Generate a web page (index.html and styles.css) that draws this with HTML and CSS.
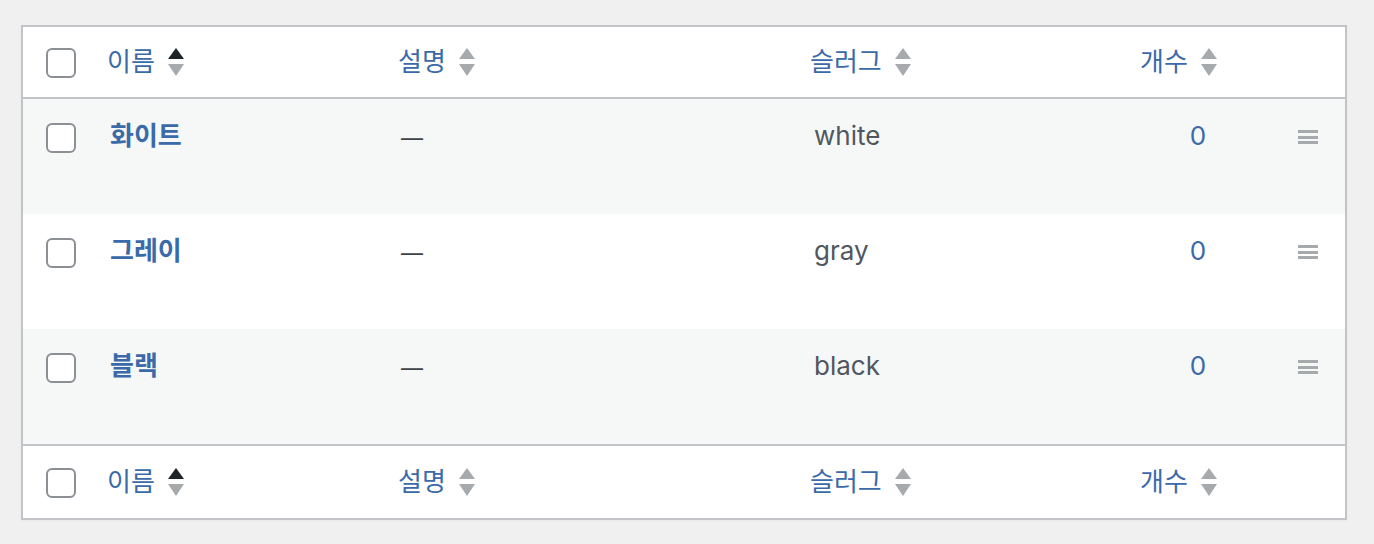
FILE: index.html
```html
<!DOCTYPE html>
<html lang="ko">
  <head>
    <meta charset="UTF-8" />
    <title>속성 목록</title>
    <link rel="stylesheet" href="styles.css">
  </head>
  <body>
    <table class="terms">
      <thead>
        <tr>
          <th class="col-check"><span class="checkbox"></span></th>
          <th class="col-name"><a href="#">이름<span class="sort sort-asc"><svg viewBox="0 0 16 28" width="16" height="28"><path class="up" d="M8 0 L16 11 L0 11 Z"/><path class="down" d="M0 16 L16 16 L8 28 Z"/></svg></span></a></th>
          <th class="col-desc"><a href="#">설명<span class="sort"><svg viewBox="0 0 16 28" width="16" height="28"><path class="up" d="M8 0 L16 11 L0 11 Z"/><path class="down" d="M0 16 L16 16 L8 28 Z"/></svg></span></a></th>
          <th class="col-slug"><a href="#">슬러그<span class="sort"><svg viewBox="0 0 16 28" width="16" height="28"><path class="up" d="M8 0 L16 11 L0 11 Z"/><path class="down" d="M0 16 L16 16 L8 28 Z"/></svg></span></a></th>
          <th class="col-count"><a href="#">개수<span class="sort"><svg viewBox="0 0 16 28" width="16" height="28"><path class="up" d="M8 0 L16 11 L0 11 Z"/><path class="down" d="M0 16 L16 16 L8 28 Z"/></svg></span></a></th>
          <th class="col-handle"></th>
        </tr>
      </thead>
      <tbody>
        <tr class="alt">
          <td class="col-check"><span class="checkbox"></span></td>
          <td class="col-name"><a class="row-title" href="#">화이트</a></td>
          <td class="col-desc"><span class="dash">—</span></td>
          <td class="col-slug">white</td>
          <td class="col-count"><a href="#">0</a></td>
          <td class="col-handle"><span class="handle"></span></td>
        </tr>
        <tr>
          <td class="col-check"><span class="checkbox"></span></td>
          <td class="col-name"><a class="row-title" href="#">그레이</a></td>
          <td class="col-desc"><span class="dash">—</span></td>
          <td class="col-slug">gray</td>
          <td class="col-count"><a href="#">0</a></td>
          <td class="col-handle"><span class="handle"></span></td>
        </tr>
        <tr class="alt">
          <td class="col-check"><span class="checkbox"></span></td>
          <td class="col-name"><a class="row-title" href="#">블랙</a></td>
          <td class="col-desc"><span class="dash">—</span></td>
          <td class="col-slug">black</td>
          <td class="col-count"><a href="#">0</a></td>
          <td class="col-handle"><span class="handle"></span></td>
        </tr>
      </tbody>
      <tfoot>
        <tr>
          <th class="col-check"><span class="checkbox"></span></th>
          <th class="col-name"><a href="#">이름<span class="sort sort-asc"><svg viewBox="0 0 16 28" width="16" height="28"><path class="up" d="M8 0 L16 11 L0 11 Z"/><path class="down" d="M0 16 L16 16 L8 28 Z"/></svg></span></a></th>
          <th class="col-desc"><a href="#">설명<span class="sort"><svg viewBox="0 0 16 28" width="16" height="28"><path class="up" d="M8 0 L16 11 L0 11 Z"/><path class="down" d="M0 16 L16 16 L8 28 Z"/></svg></span></a></th>
          <th class="col-slug"><a href="#">슬러그<span class="sort"><svg viewBox="0 0 16 28" width="16" height="28"><path class="up" d="M8 0 L16 11 L0 11 Z"/><path class="down" d="M0 16 L16 16 L8 28 Z"/></svg></span></a></th>
          <th class="col-count"><a href="#">개수<span class="sort"><svg viewBox="0 0 16 28" width="16" height="28"><path class="up" d="M8 0 L16 11 L0 11 Z"/><path class="down" d="M0 16 L16 16 L8 28 Z"/></svg></span></a></th>
          <th class="col-handle"></th>
        </tr>
      </tfoot>
    </table>
  </body>
</html>
```

FILE: styles.css
```css
* {
  margin: 0;
  padding: 0;
  box-sizing: border-box;
}
html,
body {
  width: 100%;
  height: 100%;
  overflow: hidden;
  background-color: #f0f0f1;
}
body {
  padding: 25px 0 0 21px;
  font-family: Inter, 'Noto Sans CJK KR', sans-serif;
  font-size: 26px;
  color: #50575e;
}
a {
  color: #3a6aa8;
  text-decoration: none;
}
.terms {
  width: 1326px;
  border: 2px solid #c3c4c7;
  border-spacing: 0;
  background-color: #fff;
  table-layout: fixed;
  box-shadow: 0 1px 2px rgba(0, 0, 0, 0.04);
}
th,
td {
  text-align: left;
  font-weight: normal;
  line-height: 36px;
}
thead th {
  height: 72px;
  border-bottom: 2px solid #c3c4c7;
  vertical-align: middle;
}
tfoot th {
  height: 74px;
  border-top: 2px solid #c3c4c7;
  vertical-align: middle;
}
th a {
  display: flex;
  align-items: center;
  padding-left: 17px;
}
.sort {
  display: inline-flex;
  margin-left: 13px;
}
.sort path {
  fill: #a7aaad;
}
.sort-asc .up {
  fill: #1d2327;
}
tbody td {
  height: 115px;
  vertical-align: top;
  padding-top: 19px;
}
tbody tr.alt td {
  background-color: #f6f7f7;
}
.col-check {
  width: 67px;
  padding-left: 23px;
}
th.col-check {
  padding-top: 2px;
}
tbody td.col-check {
  padding-top: 24px;
}
.checkbox {
  display: block;
  width: 30px;
  height: 30px;
  border: 2px solid #8c8f94;
  border-radius: 6px;
  background-color: #fff;
}
.col-name {
  width: 291px;
}
.col-desc {
  width: 412px;
}
.col-slug {
  width: 330px;
}
.col-count {
  width: 148px;
}
.col-handle {
  width: 74px;
}
td.col-name,
td.col-desc {
  padding-left: 20px;
}
td.col-slug {
  padding-left: 21px;
}
.row-title {
  font-weight: 600;
}
.dash {
  display: inline-block;
  font-size: 22px;
  color: #3c434a;
  transform: translateY(1px);
}
td.col-count {
  text-align: center;
  padding-left: 2px;
}
td.col-handle {
  padding-top: 31px;
}
.handle {
  display: block;
  width: 20px;
  height: 14px;
  margin: 0 auto;
  border-top: 3px solid #a7aaad;
  border-bottom: 3px solid #a7aaad;
  position: relative;
}
.handle::after {
  content: '';
  position: absolute;
  left: 0;
  right: 0;
  top: 2.5px;
  height: 3px;
  background-color: #a7aaad;
}
```
